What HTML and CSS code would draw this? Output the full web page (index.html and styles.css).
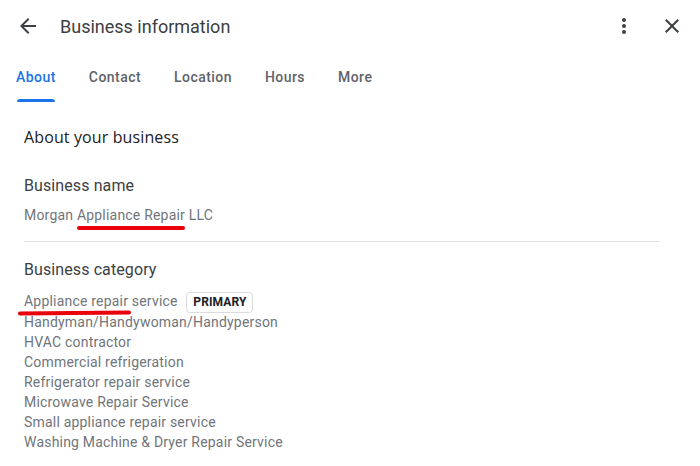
FILE: index.html
```html
<!DOCTYPE html>
<html lang="en">
<head>
    <meta charset="UTF-8">
    <title>Business information</title>
    <link rel="stylesheet" href="styles.css">
</head>
<body>
    <div class="panel">
        <header class="topbar">
            <button class="icon-btn back" aria-label="Back">
                <svg width="24" height="24" viewBox="0 0 24 24"><path d="M20 11H7.83l5.59-5.59L12 4l-8 8 8 8 1.41-1.41L7.83 13H20v-2z" fill="#3c4043"/></svg>
            </button>
            <h1 class="title">Business information</h1>
            <button class="icon-btn more" aria-label="More options">
                <svg width="24" height="24" viewBox="0 0 24 24"><path d="M12 8c1.1 0 2-.9 2-2s-.9-2-2-2-2 .9-2 2 .9 2 2 2zm0 2c-1.1 0-2 .9-2 2s.9 2 2 2 2-.9 2-2-.9-2-2-2zm0 6c-1.1 0-2 .9-2 2s.9 2 2 2 2-.9 2-2-.9-2-2-2z" fill="#3c4043"/></svg>
            </button>
            <button class="icon-btn close" aria-label="Close">
                <svg width="24" height="24" viewBox="0 0 24 24"><path d="M19 6.41L17.59 5 12 10.59 6.41 5 5 6.41 10.59 12 5 17.59 6.41 19 12 13.41 17.59 19 19 17.59 13.41 12z" fill="#3c4043"/></svg>
            </button>
        </header>

        <nav class="tabs">
            <a class="tab active" href="#">About</a>
            <a class="tab" href="#">Contact</a>
            <a class="tab" href="#">Location</a>
            <a class="tab" href="#">Hours</a>
            <a class="tab" href="#">More</a>
        </nav>

        <main class="content">
            <h2 class="section-title">About your business</h2>

            <section class="field">
                <h3 class="field-label">Business name</h3>
                <div class="field-value">Morgan <span class="marked">Appliance Repair<span class="scribble one"></span></span> LLC</div>
            </section>

            <hr class="divider">

            <section class="field">
                <h3 class="field-label">Business category</h3>
                <ul class="categories">
                    <li><span class="marked">Appliance repair<span class="scribble two"></span></span> service <span class="chip">PRIMARY</span></li>
                    <li>Handyman/Handywoman/Handyperson</li>
                    <li>HVAC contractor</li>
                    <li>Commercial refrigeration</li>
                    <li>Refrigerator repair service</li>
                    <li>Microwave Repair Service</li>
                    <li>Small appliance repair service</li>
                    <li>Washing Machine &amp; Dryer Repair Service</li>
                </ul>
            </section>
        </main>
    </div>
</body>
</html>
```

FILE: styles.css
```css
body {
    margin: 0;
    background: #fff;
    font-family: Roboto, "Liberation Sans", sans-serif;
    color: #3c4043;
}

.panel { width: 700px; height: 466px; overflow: hidden; }

.topbar {
    display: flex;
    align-items: center;
    height: 52px;
    padding: 0 16px 0 16px;
}
.icon-btn {
    display: flex;
    align-items: center;
    justify-content: center;
    width: 24px;
    height: 24px;
    padding: 0;
    border: none;
    background: none;
}
.title {
    flex: 1;
    margin: 0 0 0 20px;
    font-size: 18px;
    font-weight: 400;
    color: #3c4043;
}
.more { margin-right: 24px; }

.tabs {
    display: flex;
    padding: 0 0 0 16px;
    height: 50px;
}
.tab {
    position: relative;
    margin-right: 33px;
    padding-top: 17px;
    font-size: 14px;
    font-weight: 500;
    color: #5f6368;
    text-decoration: none;
    letter-spacing: 0.45px;
}
.tab.active { color: #1a73e8; }
.tab.active::after {
    content: "";
    position: absolute;
    left: 1px;
    right: 1px;
    bottom: 0;
    height: 3px;
    background: #1a73e8;
    border-radius: 3px 3px 0 0;
}

.content { padding: 0 41px 0 24px; }

.section-title {
    margin: 24px 0 0;
    font-family: "Open Sans", Roboto, sans-serif;
    font-size: 16px;
    font-weight: 500;
    color: #202124;
    line-height: 22px;
    letter-spacing: 0.12px;
}

.field-label {
    margin: 0;
    font-size: 16px;
    font-weight: 400;
    color: #3c4043;
    letter-spacing: 0.1px;
}
.section-title + .field { margin-top: 28px; }
.field-value {
    margin-top: 12px;
    font-size: 14px;
    color: #70757a;
    letter-spacing: 0.2px;
}

.divider {
    margin: 18px 0 18px;
    border: none;
    border-top: 1px solid #dadce0;
}

.categories {
    list-style: none;
    margin: 12px 0 0;
    padding: 0;
    font-size: 14px;
    line-height: 20px;
    color: #70757a;
    letter-spacing: 0.2px;
}
.chip {
    display: inline-block;
    margin: -1px 0 -1px 5px;
    padding: 0 6px;
    border: 1px solid #dadce0;
    border-radius: 4px;
    font-size: 12px;
    font-weight: 700;
    line-height: 19px;
    color: #202124;
    letter-spacing: 0.1px;
}

.marked { position: relative; }
.scribble {
    position: absolute;
    height: 4px;
    background: #e8000b;
    border-radius: 2px;
}
.scribble.one { left: 0; right: 0; bottom: -7px; }
.scribble.two { left: -6px; right: -3px; bottom: -6px; transform: rotate(-0.6deg); }
```
